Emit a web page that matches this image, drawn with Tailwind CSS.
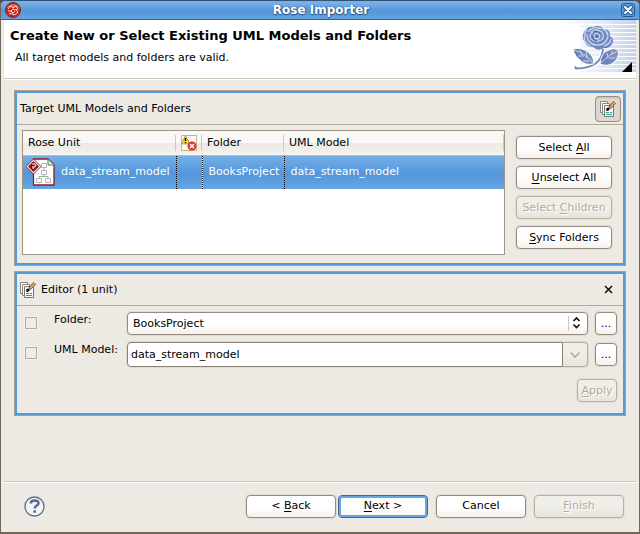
<!DOCTYPE html>
<html lang="en">
<head>
<meta charset="utf-8">
<title>Rose Importer</title>
<script src="https://cdn.jsdelivr.net/npm/@tailwindcss/browser@4"></script>
</head>
<body class="bg-[#58524a]">
<svg width="0" height="0" class="absolute" aria-hidden="true">
  <defs>
    <symbol id="edit-pages" viewBox="0 0 16 16">
      <path d="M.5.500h7v11h-7z" fill="#fff" stroke="#858585"/>
      <path d="M2.500 2.500h7v11h-7z" fill="#fff" stroke="#858585"/>
      <path d="M4.500 4.500h9v11h-9z" fill="#f4fbfa" stroke="#777"/>
      <path d="M6 11.500h3M10 11.500h2M6 13.500h6" stroke="#2a9a8a"/>
      <path d="M9.500 7L14.800 1.200" stroke="#6b4a30" stroke-width="3.200"/>
      <path d="M10 6.500L15 1" stroke="#eeae68" stroke-width="1.800"/>
      <path d="M6 9.500l.5-2.500 2-.500 1.500 1.500-2 2z" fill="#111"/>
    </symbol>
  </defs>
</svg>
<div class="flex min-h-screen flex-col overflow-hidden rounded-t-md border border-b-2 border-[#6f665c] border-t-[#2f5478] bg-[#edeae3] font-['DejaVu_Sans',sans-serif] text-[11px] leading-4 text-black">
  <header class="flex h-[19px] items-center border-b border-[#34608f] bg-linear-to-b from-[#79b0e8] from-10% via-[#5396d8] via-55% to-[#65a4e2] px-1">
    <svg class="size-4" viewBox="0 0 16 16" aria-hidden="true">
      <circle cx="8" cy="8" r="7.500" fill="#c5281c" stroke="#7a2a25"/>
      <path d="M2 6a6.500 6 0 0 1 12 0q-6-3-12 0" fill="#e9796a"/>
      <path d="M3 7l3-3 2 2 3-2 2 3-3 1-2-1-2 2-3 0M4 12l3-1 1 2 3-1 2-2-2-2M6 9l2 2 2-2" fill="none" stroke="#fbd9d2"/>
    </svg>
    <h1 class="flex-1 text-center text-xs font-bold text-white [text-shadow:0_1px_1px_#234f7c,1px_0_1px_#234f7c]">Rose Importer</h1>
    <button aria-label="Close window" class="grid size-[14px] place-items-center rounded-[3px] border border-[#285a8e] bg-[#5d9edc]">
      <svg class="size-3" viewBox="0 0 12 12"><path d="M3 3l6 6M9 3l-6 6" stroke="#285a8e" stroke-width="4" stroke-linecap="round"/><path d="M3 3l6 6M9 3l-6 6" stroke="#fff" stroke-width="2" stroke-linecap="round"/></svg>
    </button>
  </header>

  <div class="flex flex-1 flex-col px-[3px]">
    <section class="flex h-[59px] justify-between border-b border-[#cbc5b8] bg-white">
      <div class="flex flex-col gap-[5px] pt-[7px] pl-[6px]">
        <h2 class="text-[13px] leading-[18px] font-bold">Create New or Select Existing UML Models and Folders</h2>
        <p class="pl-[5px]">All target models and folders are valid.</p>
      </div>
      <svg class="h-[58px] w-[76px]" viewBox="0 0 76 58" aria-hidden="true">
        <defs>
          <linearGradient id="fade"><stop offset="0" stop-color="#fff"/><stop offset=".5" stop-color="#e8eef8"/><stop offset="1" stop-color="#c3d1ea"/></linearGradient>
          <linearGradient id="leaf" x2="1"><stop offset="0" stop-color="#6079b2"/><stop offset="1" stop-color="#8296c7"/></linearGradient>
        </defs>
        <path fill="url(#fade)" d="M0 0H76V4H0zM20 5H76V8H20zM20 9H76V12H20zM20 13H76V16H20zM20 17H76V20H20zM20 21H76V24H20zM20 25H76V28H20zM20 29H76V32H20zM20 33H76V36H20zM20 37H76V40H20zM20 41H76V44H20zM20 45H76V48H20zM20 49H76V52H20z"/>
        <g transform="translate(2 2)">
          <path d="M41 27Q40 46 14 47" stroke="#fff" stroke-width="5" fill="none"/>
          <path d="M41 27Q40 46 14 46.500l-1-2" stroke="#7389b9" stroke-width="2" fill="none"/>
          <path d="M11 27q9-2 15 3 6 4 6 12-9 2-14-4-5-3-7-11z" fill="url(#leaf)" stroke="#fff"/>
          <path d="M12 28q12 4 19 13M18 28l2 5M24 30l1 6M16 34h6M21 39h6" stroke="#ccd7ec" fill="none"/>
          <path d="M38 42q1-12 9-14 6-3 10 1-1 9-6 12-5 4-13 1z" fill="url(#leaf)" stroke="#fff"/>
          <path d="M39 41q8-9 17-12M45 31l1 5M50 29v4M47 36h6" stroke="#ccd7ec" fill="none"/>
          <path d="M22 10q3-6 9-5 7-3 11 2 7 1 6 7 5 3 2 8-3 5-8 4-6 4-11-1-7 0-8-5-4-4-1-10z" fill="#7288c3"/>
          <path d="M26 10q3-5 10-4 8 0 9 6M25 12q0 10 9 11 10 1 12-9M22 15q1 7 7 9M49 17q-1 5-7 7M29 10q5-4 11 0 4 7-3 9-8 1-9-5 0-3 3-4M32 14q1-4 5-2 2 4-1 5-4 0-3-3M25 7q-3 4-2 9M43 8q3 3 3 6" fill="none" stroke="#c9d4ed" stroke-width="1.300"/>
          <path d="M31 10q5-2 7 2M30 14q0 4 5 5M33 14l3 1" fill="none" stroke="#465f9c"/>
        </g>
        <path d="M72 42v10H62z" fill="#000"/>
      </svg>
    </section>

    <main class="flex flex-1 flex-col gap-[5px] border-t border-white px-[10px] pt-[10px] pb-6">
      <section class="border border-[#aaa08e] bg-[#edeae3]">
        <div class="border-2 border-[#539adc]">
          <div class="flex h-8 items-center justify-between border-b border-[#b3a998] pr-[2px] pl-[3px]">
            <h3>Target UML Models and Folders</h3>
            <button aria-label="Show editor" aria-pressed="true" class="grid size-[26px] place-items-center rounded border border-[#9a8f82] bg-[#ded8cf] shadow-[inset_0_1px_2px_#c5beb3]">
              <svg class="size-4"><use href="#edit-pages"/></svg>
            </button>
          </div>
          <div class="flex gap-[11px] pt-[5px] pr-[11px] pb-2 pl-[5px]">
            <div class="h-[125px] flex-1 overflow-hidden border border-[#9f9485] bg-white">
              <table class="w-full table-fixed border-collapse text-left">
                <colgroup><col class="w-[153px]"><col class="w-[26px]"><col class="w-[82px]"><col></colgroup>
                <thead>
                  <tr class="h-6 border-b border-[#c0b6a7] bg-linear-to-b from-[#faf8f5] from-50% via-[#ece8e2] via-55% to-[#f4f1ed]">
                    <th class="p-0 font-normal"><div class="border-r border-[#cfc8bc] pl-[5px]">Rose Unit</div></th>
                    <th class="p-0 font-normal"><div class="flex justify-center border-r border-[#cfc8bc] pl-px">
                      <svg class="size-4" viewBox="0 0 16 16" role="img" aria-label="Problems"><path d="M.5.5h15v15H.5z" fill="#faf9f2" stroke="#c1b889"/><path d="M4.500.8l4.200 8H.4z" fill="#ffe14a" stroke="#b69a22"/><path d="M4.500 3v3M4.500 7v1" stroke="#000" stroke-width="1.500"/><circle cx="11" cy="11" r="4.500" fill="#e3332f"/><path d="M9 9l4 4M13 9l-4 4" stroke="#fff" stroke-width="1.500"/></svg></div></th>
                    <th class="p-0 font-normal"><div class="border-r border-[#cfc8bc] pl-[5px]">Folder</div></th>
                    <th class="p-0 font-normal"><div class="border-r border-[#cfc8bc] pl-[5px]">UML Model</div></th>
                  </tr>
                </thead>
                <tbody>
                  <tr class="h-[34px] bg-linear-to-b from-[#76b0e9] from-0% via-[#5397d8] via-55% to-[#65a5e3] whitespace-nowrap text-white">
                    <td class="overflow-hidden border-r border-dotted border-black p-0"><div class="flex items-center gap-[6px] pl-[3px]">
                      <svg class="h-7 w-[29px] shrink-0" viewBox="0 0 29 28" aria-hidden="true">
                        <path d="M7.500 1H22l6 6v20H7.500z" fill="#fff" stroke="#8c1d22" stroke-width="1.300"/><path d="M22 1v6h6z" fill="#e6eee3" stroke="#527b55"/>
                        <path d="M15.500 5.500h5v4h-5zM15.500 12.500h5v4h-5zM10.500 20.500h5v4h-5zM19.500 20.500h5v4h-5z" fill="#fff" stroke="#b9b2ba"/>
                        <path d="M18 10v2M18 17v1.500h-5V20M18 18.500h4V20" fill="none" stroke="#89bd89"/>
                        <path d="M7.500 1L15 8.500 7.500 16 0 8.500z" fill="#fff" stroke="#8c1d22"/><path d="M7.500 3L13 8.500 7.500 14 2 8.500z" fill="#801318"/><path d="M6 6h3l1 2-2 1H6M8 9l-1 2" fill="none" stroke="#fff"/>
                      </svg>data_stream_model</div></td>
                    <td class="border-r border-dotted border-black p-0"></td>
                    <td class="overflow-hidden border-r border-dotted border-black p-0 pl-[6px]">BooksProject</td>
                    <td class="p-0 pl-[6px]">data_stream_model</td>
                  </tr>
                </tbody>
              </table>
            </div>
            <div class="flex w-24 flex-col gap-[7px] pt-[6px]">
              <button class="h-[23px] rounded border border-[#958a7d] bg-linear-to-b from-white from-50% to-[#f5f3f0] shadow-[0_0_1px_1px_#dfdad1]">Select <u class="underline-offset-2">A</u>ll</button>
              <button class="h-[23px] rounded border border-[#958a7d] bg-linear-to-b from-white from-50% to-[#f5f3f0] shadow-[0_0_1px_1px_#dfdad1]"><u class="underline-offset-2">U</u>nselect All</button>
              <button disabled class="h-[23px] rounded border border-[#b9aea0] bg-linear-to-b from-[#f0eee9] from-50% to-[#e8e4dd] text-[#b5aa9b] shadow-[0_0_1px_1px_#e3dfd7] [text-shadow:1px_1px_0_#fff]">Select <u class="underline-offset-2">C</u>hildren</button>
              <button class="h-[23px] rounded border border-[#958a7d] bg-linear-to-b from-white from-50% to-[#f5f3f0] shadow-[0_0_1px_1px_#dfdad1]"><u class="underline-offset-2">S</u>ync Folders</button>
            </div>
          </div>
        </div>
      </section>

      <section class="border border-[#aaa08e] bg-[#edeae3]">
        <div class="border-2 border-[#539adc]">
          <div class="flex h-8 items-center gap-[5px] border-b border-[#b3a998] pr-[10px] pl-[3px]">
            <svg class="size-4" aria-hidden="true"><use href="#edit-pages"/></svg>
            <h3 class="flex-1">Editor (1 unit)</h3>
            <button aria-label="Close editor" class="size-[9px]"><svg class="size-[9px]" viewBox="0 0 9 9"><path d="M1 1l7 7M8 1l-7 7" stroke="#000" stroke-width="1.400"/></svg></button>
          </div>
          <div class="grid grid-cols-[12px_66px_minmax(0,1fr)_22px] gap-x-[7px] gap-y-[7px] pt-[6px] pr-[6px] pb-[11px] pl-2">
            <input id="c1" type="checkbox" aria-label="Change folder" class="mt-[5px] size-3 appearance-none border border-[#b5aa9b] bg-[#efede7] shadow-[0_0_0_1px_#f6f4f0]">
            <label for="folder" class="pl-[10px]">Folder:</label>
            <div class="relative ml-[10px]">
              <select id="folder" class="block h-[23px] w-full appearance-none rounded border border-[#958a7d] bg-linear-to-b from-white from-50% to-[#f5f3f0] px-[5px] shadow-[0_0_1px_1px_#dfdad1]"><option>BooksProject</option></select>
              <svg class="pointer-events-none absolute top-1 right-1 h-[15px] w-4" viewBox="0 0 16 15" aria-hidden="true"><path d="M.5 0v15" stroke="#cbc4b9"/><path d="M5.500 5l3-3 3 3M5.500 8.500l3 3 3-3" fill="none" stroke="#111" stroke-width="1.700"/></svg>
            </div>
            <button aria-label="Browse folder" class="h-[23px] rounded border border-[#958a7d] bg-linear-to-b from-white from-50% to-[#f5f3f0] shadow-[0_0_1px_1px_#dfdad1]">...</button>
            <input id="c2" type="checkbox" aria-label="Change UML model" class="mt-[5px] size-3 appearance-none border border-[#b5aa9b] bg-[#efede7] shadow-[0_0_0_1px_#f6f4f0]">
            <label for="model" class="pl-[10px] whitespace-nowrap">UML Model:</label>
            <div class="ml-[10px] flex h-[25px] rounded shadow-[0_0_1px_1px_#dfdad1]">
              <input id="model" value="data_stream_model" class="min-w-0 flex-1 rounded-l border border-[#8a7f72] bg-white px-[3px]">
              <button aria-label="Show models" class="grid w-[25px] place-items-center rounded-r border border-l-0 border-[#b5aa9b] bg-linear-to-b from-[#f0eee9] from-50% to-[#e8e4dd]"><svg class="h-[6px] w-[10px]" viewBox="0 0 10 6"><path d="M.5.5L5 5 9.500.5" fill="none" stroke="#b0a596" stroke-width="1.500"/></svg></button>
            </div>
            <button aria-label="Browse UML model" class="mt-px h-[23px] rounded border border-[#958a7d] bg-linear-to-b from-white from-50% to-[#f5f3f0] shadow-[0_0_1px_1px_#dfdad1]">...</button>
            <button disabled class="col-span-4 mt-[5px] h-[23px] w-10 justify-self-end rounded border border-[#b9aea0] bg-linear-to-b from-[#f0eee9] from-50% to-[#e8e4dd] text-[#b5aa9b] shadow-[0_0_1px_1px_#e3dfd7] [text-shadow:1px_1px_0_#fff]"><u class="underline-offset-2">A</u>pply</button>
          </div>
        </div>
      </section>
    </main>

    <footer class="flex h-[51px] items-center justify-between border-t border-[#cbc5b8] pr-3 pb-[2px] pl-5 shadow-[inset_0_1px_0_#fff]">
      <button aria-label="Help" class="size-[21px]">
        <svg class="size-[21px]" viewBox="0 0 21 21"><circle cx="10.500" cy="10.500" r="9.500" fill="#f4f4f4" stroke="#5a6f92" stroke-width="1.300"/><path d="M6.800 7.500q0-3 3.900-3t3.800 2.700c0 2.500-3.700 2.300-3.700 5.300M10.700 14.300v2.500" fill="none" stroke="#536a91" stroke-width="2.500"/></svg>
      </button>
      <div class="flex gap-2">
        <div class="flex gap-[2px]">
          <button class="h-[23px] w-[90px] rounded border border-[#958a7d] bg-linear-to-b from-white from-50% to-[#f5f3f0] shadow-[0_0_1px_1px_#dfdad1]">&lt; <u class="underline-offset-2">B</u>ack</button>
          <button class="h-[23px] w-[90px] rounded border border-[#47648a] bg-linear-to-b from-white from-50% to-[#f5f3f0] shadow-[inset_0_0_0_2px_#65a8e8]"><u class="underline-offset-2">N</u>ext &gt;</button>
        </div>
        <button class="h-[23px] w-[90px] rounded border border-[#958a7d] bg-linear-to-b from-white from-50% to-[#f5f3f0] shadow-[0_0_1px_1px_#dfdad1]">Cancel</button>
        <button disabled class="h-[23px] w-[90px] rounded border border-[#b9aea0] bg-linear-to-b from-[#f0eee9] from-50% to-[#e8e4dd] text-[#b5aa9b] shadow-[0_0_1px_1px_#e3dfd7] [text-shadow:1px_1px_0_#fff]"><u class="underline-offset-2">F</u>inish</button>
      </div>
    </footer>
  </div>
</div>
</body>
</html>
